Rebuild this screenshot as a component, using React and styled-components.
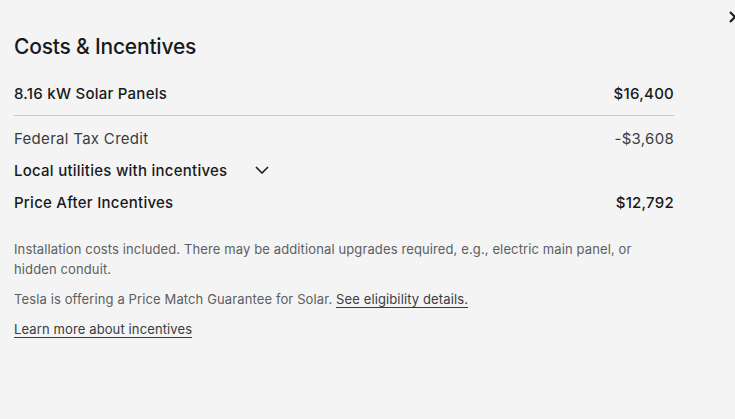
import React from "react";
import styled, { createGlobalStyle } from "styled-components";

const GlobalStyle = createGlobalStyle`
  html, body { margin: 0; padding: 0; background: #f4f4f4; }
  body { font-family: Inter, "Noto Sans", "Liberation Sans", sans-serif; color: #171a20; -webkit-font-smoothing: antialiased; }
`;

const Page = styled.div`
  position: relative;
  width: 735px;
  height: 419px;
  overflow: hidden;
  background: #f4f4f4;
  box-sizing: border-box;
  padding: 33px 61px 0 14px;
`;

const Close = styled.button`
  position: absolute;
  top: 9px;
  right: -8px;
  width: 16px;
  height: 16px;
  padding: 0;
  border: 0;
  background: none;
  color: #171a20;
  display: flex;
  align-items: center;
  justify-content: center;
`;

const Title = styled.h2`
  margin: 0 0 16px;
  font-size: 21px;
  line-height: 28px;
  font-weight: 500;
  letter-spacing: -0.2px;
  color: #171a20;
`;

const Row = styled.div`
  display: flex;
  align-items: center;
  justify-content: space-between;
  height: 32px;
  font-size: 15px;
  letter-spacing: ${(p) => (p.$bold ? "0.25px" : "0.3px")};
  font-weight: ${(p) => (p.$bold ? 500 : 400)};
  color: ${(p) => (p.$bold ? "#171a20" : "#393c41")};
`;

const Divider = styled.hr`
  border: 0;
  border-top: 1px solid #c9c9c9;
  margin: 6px 0;
`;

const LabelGroup = styled.div`
  display: flex;
  align-items: center;
  gap: 28px;
`;

const Chevron = styled.svg`
  width: 14px;
  height: 8px;
  display: block;
`;

const Notes = styled.div`
  margin-top: 21px;
  display: flex;
  flex-direction: column;
  gap: 10px;
  font-size: 13px;
  letter-spacing: 0.12px;
  line-height: 20px;
  color: #5c5e62;
  padding-right: 30px;
`;

const Note = styled.p`
  margin: 0;
`;

const Link = styled.a`
  color: #393c41;
  text-decoration: none;
  box-shadow: 0 1px 0 0 #393c41;
  cursor: pointer;
`;

export default function App() {
  return (
    <>
      <GlobalStyle />
      <Page>
        <Close aria-label="Close">
          <svg width="14" height="14" viewBox="0 0 14 14">
            <path d="M2 2 L12 12 M12 2 L2 12" stroke="currentColor" strokeWidth="2.2" fill="none" />
          </svg>
        </Close>
        <Title>Costs &amp; Incentives</Title>
        <Row $bold>
          <span>8.16 kW Solar Panels</span>
          <span>$16,400</span>
        </Row>
        <Divider />
        <Row>
          <span>Federal Tax Credit</span>
          <span>-$3,608</span>
        </Row>
        <Row $bold>
          <LabelGroup>
            <span>Local utilities with incentives</span>
            <Chevron viewBox="0 0 14 8">
              <path d="M1 1 L7 7 L13 1" stroke="#171a20" strokeWidth="1.6" fill="none" />
            </Chevron>
          </LabelGroup>
        </Row>
        <Row $bold>
          <span>Price After Incentives</span>
          <span>$12,792</span>
        </Row>
        <Notes>
          <Note>
            Installation costs included. There may be additional upgrades required, e.g., electric main panel, or hidden conduit.
          </Note>
          <Note>
            Tesla is offering a Price Match Guarantee for Solar. <Link>See eligibility details.</Link>
          </Note>
          <Note>
            <Link>Learn more about incentives</Link>
          </Note>
        </Notes>
      </Page>
    </>
  );
}
